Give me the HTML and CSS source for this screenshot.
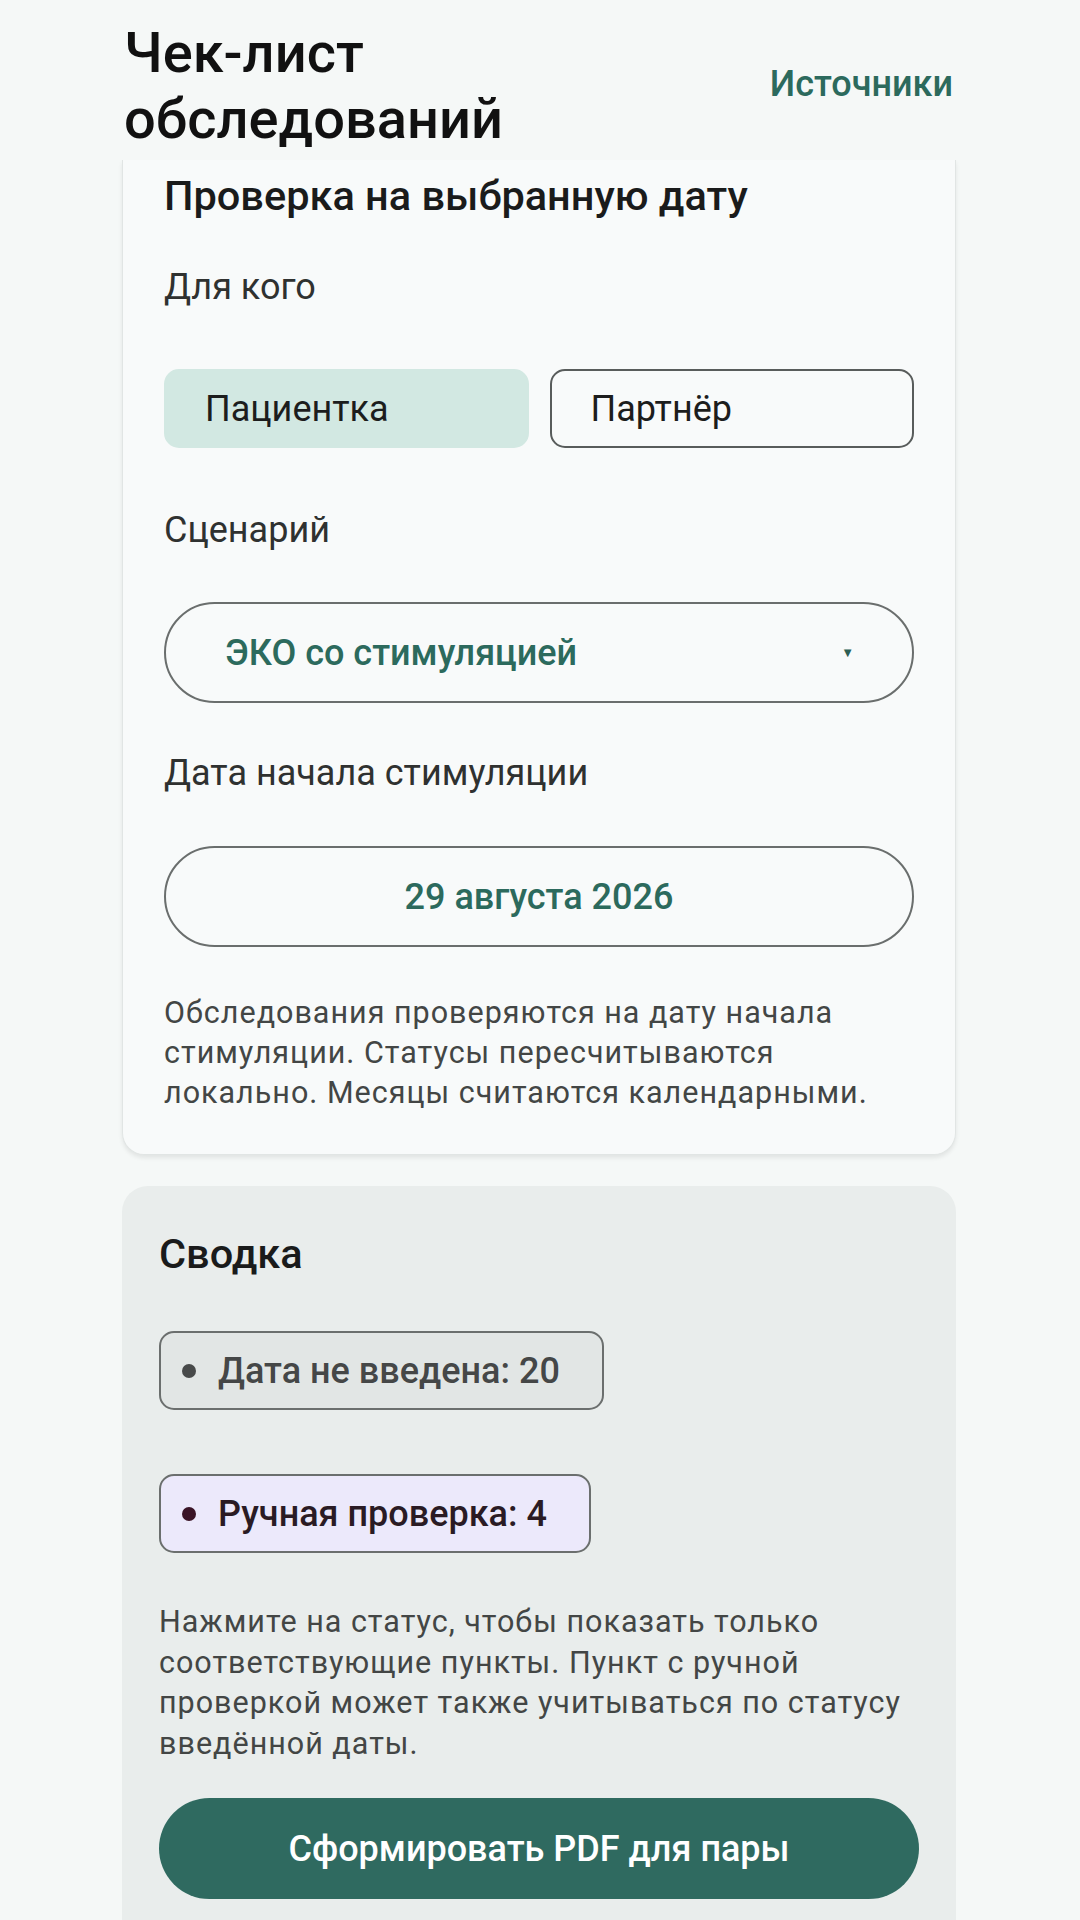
FILE: index.html
```html
<!DOCTYPE html>
<html lang="ru">
<head>
  <meta charset="UTF-8">
  <title>Чек-лист обследований</title>
  <link rel="stylesheet" href="styles.css">
</head>
<body>
  <div class="page">
    <header class="top-bar">
      <h1>Чек-лист<br>обследований</h1>
      <a class="sources-link" href="#">Источники</a>
    </header>

    <section class="card check-card">
      <h2>Проверка на выбранную дату</h2>

      <div class="field-label">Для кого</div>
      <div class="who-toggle">
        <button class="who-btn selected">Пациентка</button>
        <button class="who-btn">Партнёр</button>
      </div>

      <div class="field-label scenario-label">Сценарий</div>
      <button class="pill-field select-field">
        <span>ЭКО со стимуляцией</span>
        <span class="select-arrow">▼</span>
      </button>

      <div class="field-label date-label">Дата начала стимуляции</div>
      <button class="pill-field date-field">29 августа 2026</button>

      <p class="hint">Обследования проверяются на дату начала стимуляции. Статусы пересчитываются локально. Месяцы считаются календарными.</p>
    </section>

    <section class="card summary-card">
      <h2>Сводка</h2>

      <div class="status-list">
        <button class="status-chip no-date"><span class="dot"></span>Дата не введена: 20</button>
        <button class="status-chip manual"><span class="dot"></span>Ручная проверка: 4</button>
      </div>

      <p class="hint summary-hint">Нажмите на статус, чтобы показать только соответствующие пункты. Пункт с ручной проверкой может также учитываться по статусу введённой даты.</p>

      <button class="pdf-btn">Сформировать PDF для пары</button>
    </section>
  </div>
</body>
</html>
```

FILE: styles.css
```css
* {
  box-sizing: border-box;
  margin: 0;
  padding: 0;
}

body {
  font-family: Roboto, 'Noto Sans', sans-serif;
  background: #f5f8f7;
  color: #1b1c1c;
  height: 1920px;
  overflow: hidden;
}

button {
  font-family: inherit;
  background: none;
  border: none;
  cursor: pointer;
}

.page {
  padding: 0 124px 0 122px;
}

.top-bar {
  position: sticky;
  top: 0;
  z-index: 2;
  display: flex;
  justify-content: space-between;
  align-items: center;
  padding: 20px 3px 8px 2px;
  background: #f5f8f7;
}

.top-bar h1 {
  font-size: 56px;
  line-height: 66px;
  font-weight: 500;
  color: #111;
}

.sources-link {
  font-size: 36px;
  font-weight: 500;
  color: #2c6a5d;
  text-decoration: none;
  margin-bottom: 4px;
}

.card {
  border-radius: 22px;
  padding: 46px 41px;
}

h2 {
  font-size: 41.5px;
  line-height: 44px;
  font-weight: 500;
  color: #1a1b1b;
}

/* top of this card is scrolled out of view */
.check-card {
  background: #f8fafa;
  border: 1.5px solid #e1e5e4;
  border-top: none;
  border-radius: 0 0 22px 22px;
  padding-top: 14px;
  padding-bottom: 41px;
  box-shadow: 0 3px 4px rgba(0, 0, 0, 0.08);
}

.field-label {
  font-size: 36px;
  line-height: 44px;
  color: #2f3130;
  margin-top: 47px;
}

.who-toggle {
  display: flex;
  gap: 21px;
  margin-top: 60px;
}

.who-btn {
  flex: 1;
  height: 79px;
  border-radius: 15px;
  border: 2px solid #585c5b;
  padding-left: 39px;
  text-align: left;
  font-size: 36px;
  color: #1c1d1d;
}

.who-btn.selected {
  background: #d2e8e2;
  border-color: #d2e8e2;
}

.scenario-label {
  margin-top: 60px;
}

.pill-field {
  width: 100%;
  height: 101px;
  border-radius: 51px;
  border: 2px solid #6a6e6d;
  font-size: 36px;
  font-weight: 500;
  color: #2c6a5d;
  margin-top: 50px;
}

.select-field {
  display: flex;
  justify-content: space-between;
  align-items: center;
  padding: 0 58px 0 59px;
}

.select-arrow {
  font-size: 13px;
  color: #2c5f54;
}

.date-label {
  margin-top: 48px;
}

.date-field {
  margin-top: 51px;
  text-align: center;
}

.hint {
  font-size: 30.5px;
  line-height: 40px;
  letter-spacing: 1px;
  color: #434645;
  margin-top: 46px;
}

.summary-card {
  background: #e9edec;
  margin-top: 31px;
  padding: 46px 37px 60px;
  border-radius: 26px 26px 0 0;
}

.status-list {
  display: flex;
  flex-direction: column;
  align-items: flex-start;
  gap: 64px;
  margin-top: 55px;
}

.status-chip {
  display: flex;
  align-items: center;
  gap: 22px;
  height: 79px;
  padding: 0 42px 0 21px;
  border-radius: 15px;
  border: 2px solid #6b6f6e;
  font-size: 36px;
  font-weight: 500;
}

.status-chip .dot {
  width: 14px;
  height: 14px;
  border-radius: 50%;
}

.no-date {
  background: #e2e6e5;
  color: #454747;
}

.no-date .dot {
  background: #484a4a;
}

.manual {
  background: #ece9fb;
  color: #2a1b24;
}

.manual .dot {
  background: #3a1426;
}

.summary-hint {
  margin-top: 49px;
  line-height: 40.5px;
}

.pdf-btn {
  display: block;
  width: 100%;
  height: 101px;
  margin-top: 34px;
  border-radius: 51px;
  background: #2f6a60;
  color: #fff;
  font-size: 36px;
  font-weight: 500;
}
```
